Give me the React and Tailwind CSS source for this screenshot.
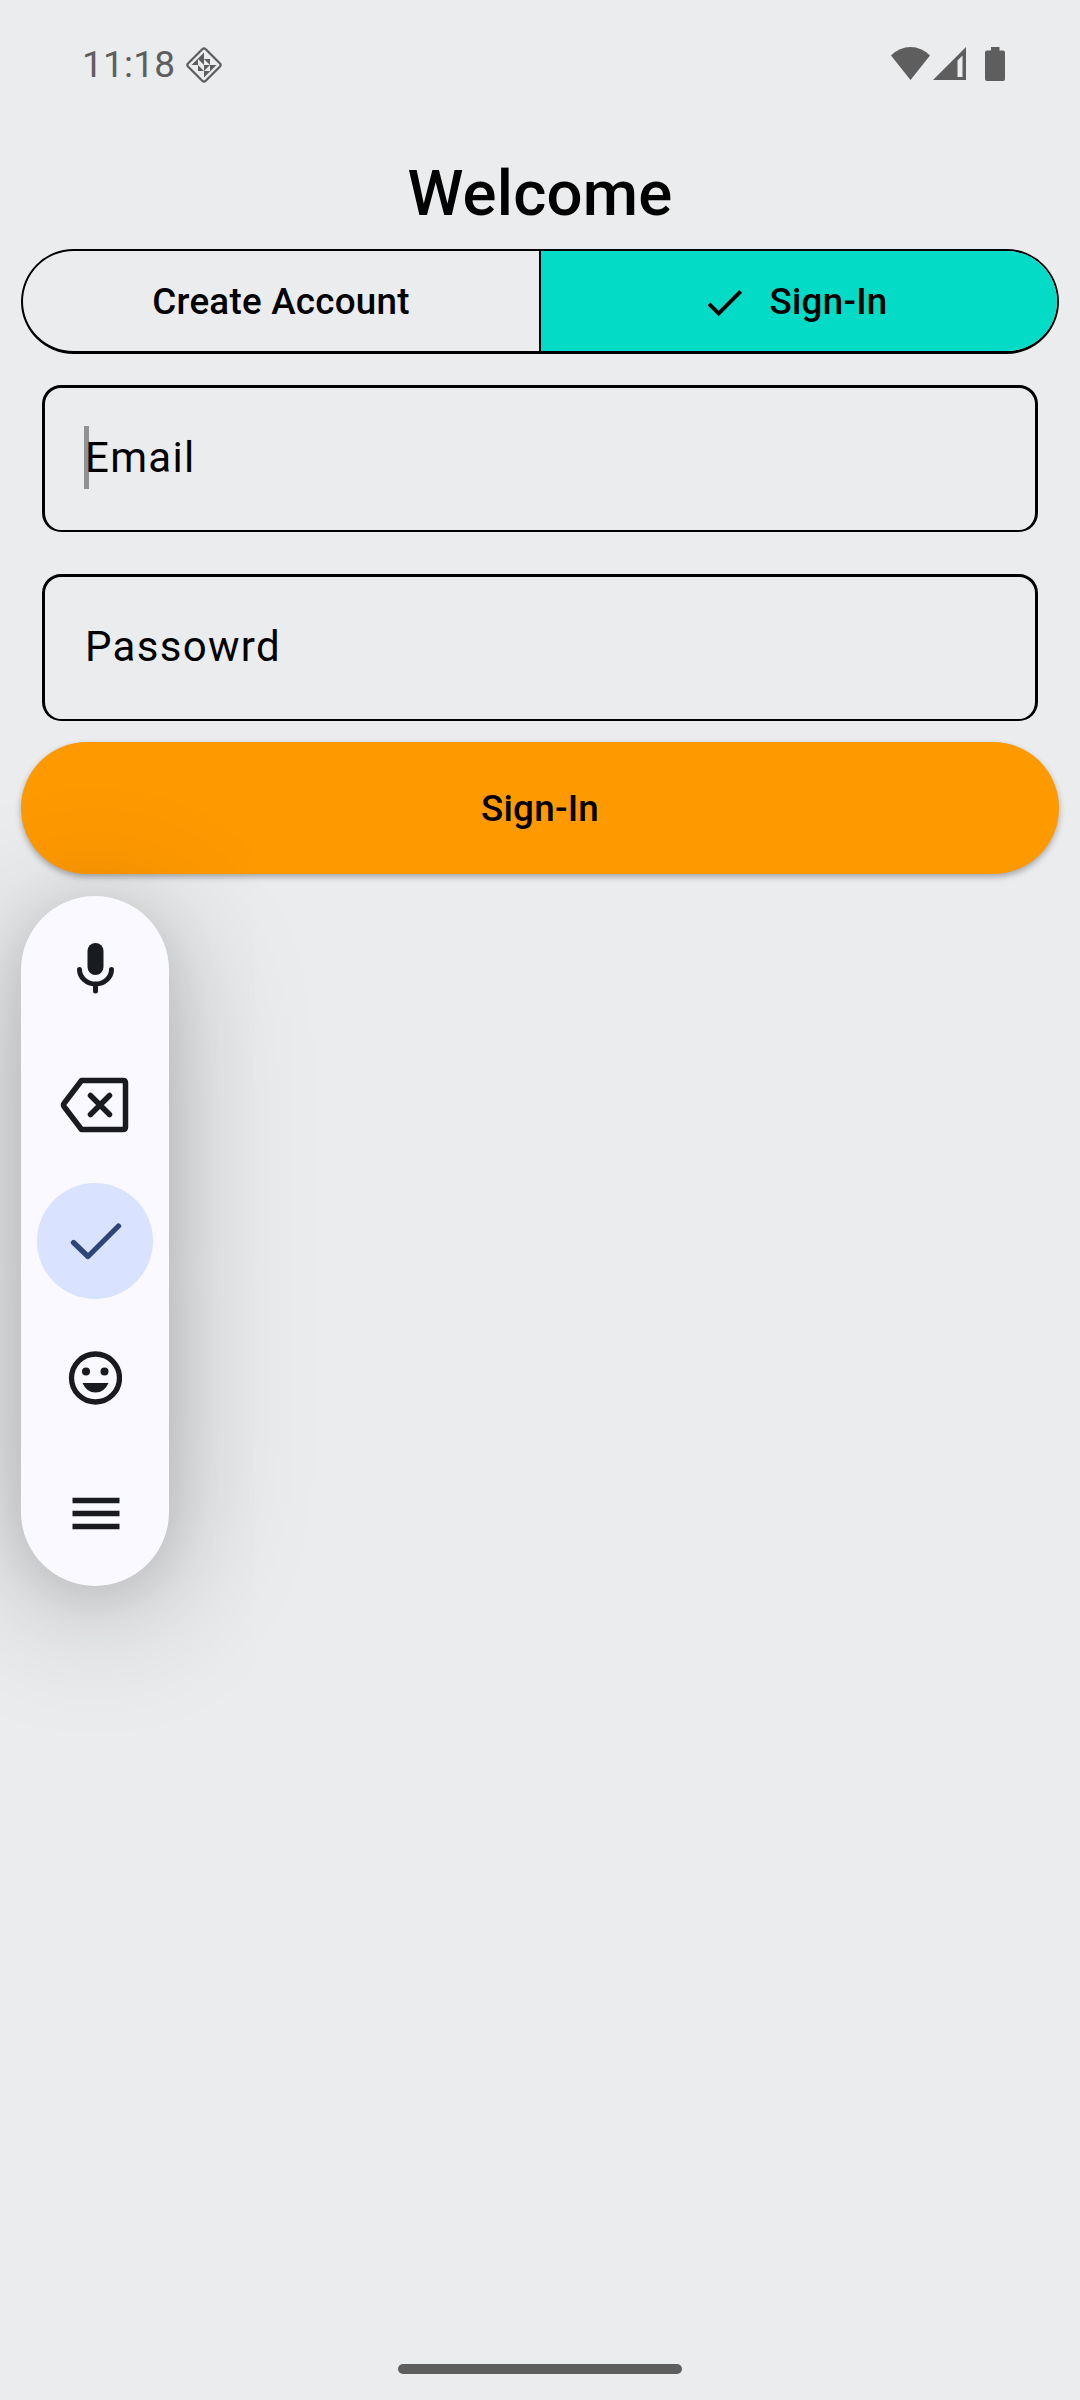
function StatusBar() {
  return (
    <header className="flex h-32 w-full items-center justify-between pl-[82px] pr-[75px] text-[#5e5e5e]">
      <div className="flex items-center gap-[10px] pt-[2px]">
        <span className="text-[37px] leading-[44px] tracking-[0.2px]">11:18</span>
        <svg className="h-[38px] w-[38px]" viewBox="0 0 38 38">
          <rect x="6.6" y="6.6" width="24.8" height="24.8" rx="2.5" transform="rotate(45 19 19)" fill="none" stroke="currentColor" strokeWidth="2.2" />
          <path fill="currentColor" d="M19 6.500V13h-6.500zM13 12.500V19H6.500zM13 13h6v6zM19 13h6v6zM13 19v6h6zM19 19h6l-6 6zM19 25h6.500L19 31.500zM25 19h6.500L25 25.500z" />
        </svg>
      </div>
      <div className="flex items-start">
        <svg className="h-[34px] w-[39px]" viewBox="0 0 39 34">
          <path fill="currentColor" d="M0 8.500Q8.500 0 19.500 0T39 8.500L19.500 33z" />
        </svg>
        <svg className="ml-[3px] h-[34px] w-[34px]" viewBox="0 0 34 34">
          <path fill="currentColor" fillRule="evenodd" d="M0 33L33 0V33zM24.500 13.500V30H29.500V8.500z" />
        </svg>
        <svg className="ml-[18px] h-[34px] w-[20px]" viewBox="0 0 20 34">
          <path fill="currentColor" d="M6 0h8.500v3.500H18a2 2 0 0 1 2 2V32a2 2 0 0 1-2 2H2a2 2 0 0 1-2-2V5.500a2 2 0 0 1 2-2h4z" />
        </svg>
      </div>
    </header>
  );
}

function SegmentedControl() {
  return (
    <div className="mt-[13px] flex h-[105px] w-[1038px] overflow-hidden rounded-full border-2 border-b-[3px] border-black text-[36.75px] font-medium tracking-[0.26px]">
      <button className="flex w-[518px] items-center justify-center border-r-2 border-black pt-[2px]">Create Account</button>
      <button className="flex flex-1 items-center justify-center gap-[21px] bg-[#03dbc7] pr-[9px] pt-[2px]">
        <svg className="h-[47px] w-[47px]" viewBox="0 0 24 24">
          <path d="M9 16.170L4.830 12l-1.420 1.410L9 19 21 7l-1.410-1.410z" />
        </svg>
        Sign-In
      </button>
    </div>
  );
}

function Field({ label, focused }) {
  return (
    <div className="flex h-[147px] w-[996px] items-center rounded-[19px] border-[3px] border-b-2 border-black pb-[3px] pl-[39px]">
      {focused && <span className="-mr-[5px] h-[63px] w-[5px] bg-[#929292]" />}
      <span className="relative pl-px text-[42px] leading-[61px] tracking-[1.31px]">{label}</span>
    </div>
  );
}

function KeyboardToolbar() {
  return (
    <aside className="relative ml-[21px] mt-[22px] flex h-[690px] w-[148px] flex-col items-center self-start rounded-full bg-[#f9f9ff] pt-[13px] text-[#1a1b20] shadow-[0_20px_145px_rgba(0,0,0,0.24),0_8px_56px_rgba(0,0,0,0.11)]">
      <button className="flex h-[116px] w-[116px] items-center justify-center pt-[2px]">
        <svg className="h-[52px] w-[40px]" viewBox="0 0 40 52">
          <rect x="12.500" y="1" width="16" height="32" rx="8" fill="currentColor" />
          <path d="M4.500 27.500a16 14.500 0 0 0 32 0M20.500 42v7" fill="none" stroke="currentColor" strokeWidth="5" strokeLinecap="round" />
        </svg>
      </button>
      <button className="mt-[20px] flex h-[116px] w-[116px] items-center justify-center pr-[3px] pt-[4px]">
        <svg className="h-[56px] w-[70px]" viewBox="0 0 70 56">
          <path d="M22.500 3.500H64q2.500 0 2.500 2.500V50q0 2.500-2.500 2.500H22.500L5 29.500q-1-1.500 0-3z" fill="none" stroke="currentColor" strokeWidth="5.500" strokeLinejoin="round" />
          <path d="M31.500 18.500l19 19M50.500 18.500l-19 19" fill="none" stroke="currentColor" strokeWidth="5.500" strokeLinecap="round" />
        </svg>
      </button>
      <button className="mt-[22px] flex h-[116px] w-[116px] items-center justify-center rounded-full bg-[#d9e2ff] pl-[1px] text-[#2f4578]">
        <svg className="h-[38px] w-[52px]" viewBox="0 0 52 38">
          <path d="M3.500 20.500L18 34.500 48.500 4" fill="none" stroke="currentColor" strokeWidth="5.300" strokeLinecap="round" strokeLinejoin="round" />
        </svg>
      </button>
      <button className="mt-[20px] flex h-[116px] w-[116px] items-center justify-center pt-[1px]">
        <svg className="h-[54px] w-[54px]" viewBox="0 0 54 54">
          <circle cx="27.500" cy="27" r="24" fill="none" stroke="currentColor" strokeWidth="5.300" />
          <circle cx="18" cy="20.500" r="4" fill="currentColor" />
          <circle cx="36.500" cy="20.500" r="4" fill="currentColor" />
          <path d="M14.500 32h26q-4 9.500-13 9.500T14.500 32z" fill="currentColor" />
        </svg>
      </button>
      <button className="mt-[20px] flex h-[116px] w-[116px] items-center justify-center pl-[1px] pt-[2px]">
        <svg className="h-[34px] w-[48px]" viewBox="0 0 48 34">
          <path d="M.5 3.500h47M.5 16.500h47M.5 29.500h47" stroke="currentColor" strokeWidth="5.300" />
        </svg>
      </button>
    </aside>
  );
}

export default function App() {
  return (
    <div className="flex h-[2400px] w-[1080px] flex-col items-center overflow-hidden bg-[#ebecee] font-['Roboto',sans-serif] text-black">
      <StatusBar />
      <h1 className="mt-[24px] text-[63.500px] font-medium leading-[84px] tracking-[0.2px]">Welcome</h1>
      <SegmentedControl />
      <form className="mt-[31px] flex w-full flex-col items-center gap-[42px]">
        <Field label="Email" focused />
        <Field label="Passowrd" />
      </form>
      <button className="mt-[21px] h-[132px] w-[1038px] shrink-0 rounded-full bg-[#ff9900] pt-[2px] text-[36.75px] font-medium tracking-[0.26px] shadow-[0_3px_6px_rgba(0,0,0,0.3)]">Sign-In</button>
      <KeyboardToolbar />
      <div className="mb-[26px] mt-auto h-[10px] w-[284px] rounded-full bg-[#5e5e5e]" />
    </div>
  );
}
